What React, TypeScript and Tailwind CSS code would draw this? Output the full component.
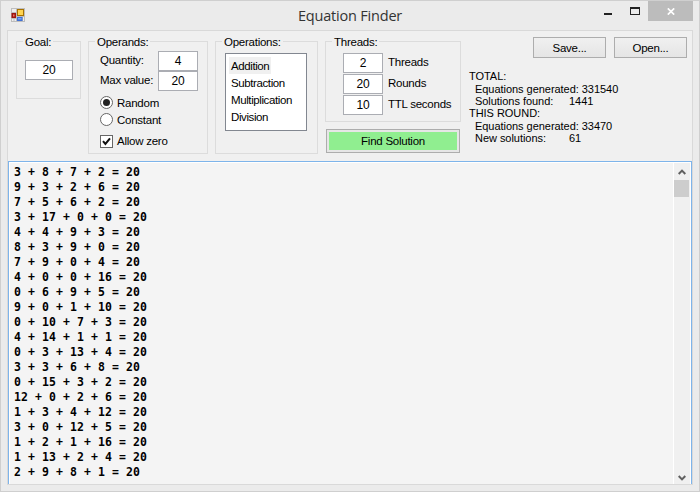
import React from 'react';

const equations = [
  '3 + 8 + 7 + 2 = 20',
  '9 + 3 + 2 + 6 = 20',
  '7 + 5 + 6 + 2 = 20',
  '3 + 17 + 0 + 0 = 20',
  '4 + 4 + 9 + 3 = 20',
  '8 + 3 + 9 + 0 = 20',
  '7 + 9 + 0 + 4 = 20',
  '4 + 0 + 0 + 16 = 20',
  '0 + 6 + 9 + 5 = 20',
  '9 + 0 + 1 + 10 = 20',
  '0 + 10 + 7 + 3 = 20',
  '4 + 14 + 1 + 1 = 20',
  '0 + 3 + 13 + 4 = 20',
  '3 + 3 + 6 + 8 = 20',
  '0 + 15 + 3 + 2 = 20',
  '12 + 0 + 2 + 6 = 20',
  '1 + 3 + 4 + 12 = 20',
  '3 + 0 + 12 + 5 = 20',
  '1 + 2 + 1 + 16 = 20',
  '1 + 13 + 2 + 4 = 20',
  '2 + 9 + 8 + 1 = 20',
];

function Group({ label, className, children }: { label: string; className: string; children: React.ReactNode }) {
  return (
    <section className={`flex flex-col border border-[#dcdcdc] ${className}`}>
      <h2 className="-mt-[8px] ml-[6px] h-[14px] shrink-0 self-start bg-[#f0f0f0] px-[2px] leading-[16px]">{label}</h2>
      {children}
    </section>
  );
}

function Field({ value, className }: { value: string; className: string }) {
  return (
    <div className={`h-5 shrink-0 border border-[#abadb3] bg-white text-center text-[12px] leading-[18px] ${className}`}>
      {value}
    </div>
  );
}

function Chevron({ down = false }: { down?: boolean }) {
  return (
    <svg width="8" height="6" viewBox="0 0 8 6" className={down ? 'rotate-180' : ''}>
      <path d="M.7 5 4 1.6 7.3 5" fill="none" stroke="#606060" strokeWidth="2" />
    </svg>
  );
}

function TitleBar() {
  return (
    <header className="flex h-[29px] items-start">
      <svg width="14" height="14" viewBox="0 0 14 14" className="mt-[7px] ml-[10px]">
        <rect width="14" height="14" fill="#bdbdbd" />
        <path d="M1 1h4v3H1zM1 11h1.5v2H1zM3.5 11h1.5v2H3.5zM12 9h1v4h-1z" fill="#eee" />
        <rect x=".5" y="5" width="4.5" height="5" fill="#9e1610" />
        <rect x="2" y="6.5" width="1.5" height="2" fill="#ef7768" />
        <rect x="6" y="1" width="7" height="7" fill="#a77100" />
        <rect x="7" y="2" width="5" height="5" fill="#ffd451" />
        <rect x="6" y="9" width="5.5" height="4" fill="#3f70d6" />
        <rect x="7" y="10" width="3.5" height="1.5" fill="#79a8f4" />
      </svg>
      <h1 className="mt-[5px] ml-[273px] w-[250px] font-['Open_Sans',sans-serif] text-[14.5px] leading-5 tracking-[-0.2px] text-[#333]">
        Equation Finder
      </h1>
      <div className="ml-[56px] mt-[12px] h-[2px] w-[8px] bg-[#222]" />
      <div className="ml-[18px] mt-[6px] h-[8px] w-[10px] border border-t-2 border-[#222]" />
      <div className="ml-[8px] flex h-5 w-[45px] items-center justify-center bg-[#bcbcbc]">
        <svg width="8" height="7" viewBox="0 0 8 7">
          <path d="m.8.4 6.4 6.2M7.2.4.8 6.6" stroke="#fff" strokeWidth="1.7" />
        </svg>
      </div>
    </header>
  );
}

function Stats() {
  return (
    <div className="mt-[12px] ml-[8px] flex flex-col whitespace-pre text-[11px] leading-3 tracking-[-0.04px]">
      <p className="h-[13px] leading-[13px]">TOTAL:</p>
      <p className="h-3 pl-[6px]">Equations generated: 331540</p>
      <p className="flex h-3 pl-[6px]"><span className="w-[94px]">Solutions found:</span>1441</p>
      <p className="h-[13px]">THIS ROUND:</p>
      <p className="h-3 pl-[6px]">Equations generated: 33470</p>
      <p className="flex h-3 pl-[6px]"><span className="w-[94px]">New solutions:</span>61</p>
    </div>
  );
}

export default function App() {
  return (
    <div className="flex h-[492px] w-[700px] flex-col overflow-hidden border border-[#cfcfcf] bg-[#ebebeb] font-['Liberation_Sans',Arial,sans-serif] text-[11.5px] tracking-[-0.25px] text-black">
      <TitleBar />
      <main className="ml-[6px] flex h-[455px] w-[686px] flex-col border border-[#d9d9d9] bg-[#f0f0f0]">
        <div className="flex h-[130px] shrink-0 items-start">
          <Group label="Goal:" className="mt-[10px] ml-[8px] h-[58px] w-[65px]">
            <Field value="20" className="mt-[12px] ml-[8px] w-12" />
          </Group>
          <Group label="Operands:" className="mt-[10px] ml-[7px] h-[113px] w-[120px]">
            <div className="mt-[3px] flex items-center pl-[11px]">
              <span className="w-[58px]">Quantity:</span>
              <Field value="4" className="w-10" />
            </div>
            <div className="flex items-center pl-[11px]">
              <span className="w-[58px] whitespace-nowrap">Max value:</span>
              <Field value="20" className="w-10" />
            </div>
            <div className="mt-[5px] flex h-[13px] items-center gap-[4px] pl-[11px]">
              <span className="flex size-[13px] items-center justify-center rounded-full border border-[#666] bg-white">
                <span className="size-[7px] rounded-full bg-[#222]" />
              </span>
              <span className="pt-px leading-[15px]">Random</span>
            </div>
            <div className="mt-[4px] flex h-[13px] items-center gap-[4px] pl-[11px]">
              <span className="size-[13px] rounded-full border border-[#666] bg-white" />
              <span className="pt-px leading-[15px]">Constant</span>
            </div>
            <div className="mt-[9px] flex h-[13px] items-center gap-[4px] pl-[11px]">
              <svg width="13" height="13" viewBox="0 0 13 13">
                <rect x=".5" y=".5" width="12" height="12" fill="#fff" stroke="#666" />
                <path d="M3 6.2 5.4 9 10 3.3" fill="none" stroke="#111" strokeWidth="2" />
              </svg>
              <span className="leading-[15px]">Allow zero</span>
            </div>
          </Group>
          <Group label="Operations:" className="mt-[10px] ml-[7px] h-[113px] w-[103px]">
            <ul className="mt-[5px] ml-[9px] h-[78px] w-[82px] border border-[#828790] bg-white pt-[3px] pl-[3px] tracking-[-0.4px]">
              <li className="h-[17px] w-[42px] bg-[#f0f0f0] pl-[2px] leading-[18px]">Addition</li>
              <li className="h-[17px] pl-[2px] leading-[18px]">Subtraction</li>
              <li className="h-[17px] pl-[2px] leading-[18px]">Multiplication</li>
              <li className="h-[17px] pl-[2px] leading-[18px]">Division</li>
            </ul>
          </Group>
          <div className="mt-[10px] ml-[7px] w-[136px]">
            <Group label="Threads:" className="h-[81px]">
              <div className="mt-[5px] flex flex-col gap-px pl-[17px]">
                {[['2', 'Threads'], ['20', 'Rounds'], ['10', 'TTL seconds']].map(([v, t]) => (
                  <div key={t} className="flex items-center gap-[5px]">
                    <Field value={v} className="w-10" />
                    <span>{t}</span>
                  </div>
                ))}
              </div>
            </Group>
            <button className="mt-[7px] ml-px block h-6 w-[134px] border border-[#adadad] bg-[#e6e6e6] p-[2px]">
              <span className="block h-[18px] bg-[#90ee90] leading-[18px]">Find Solution</span>
            </button>
          </div>
          <div className="flex flex-col">
            <div className="mt-[6px] ml-[72px] flex gap-[8px]">
              <button className="h-[21px] w-[73px] border border-[#adadad] bg-linear-to-b from-[#f0f0f0] to-[#e5e5e5] leading-[18px]">Save...</button>
              <button className="h-[21px] w-[73px] border border-[#adadad] bg-linear-to-b from-[#f0f0f0] to-[#e5e5e5] leading-[18px]">Open...</button>
            </div>
            <Stats />
          </div>
        </div>
        <div className="flex h-[323px] w-[684px] border border-b-0 border-[#7eb4ea] bg-white pt-px pr-px pl-px">
          <pre className="w-[663px] bg-[#f4f4f4] pt-[2px] pl-[4px] font-['DejaVu_Sans_Mono',monospace] text-[11.5px] leading-[15px] font-bold tracking-[0.077px]">
            {equations.join('\n')}
          </pre>
          <div className="ml-px flex w-4 flex-col items-center bg-[#f0f0f0]">
            <div className="flex h-[17px] items-center"><Chevron /></div>
            <div className="h-[17px] w-[15px] self-start bg-[#cdcdcd]" />
            <div className="mt-auto flex h-[13px] items-center"><Chevron down /></div>
          </div>
        </div>
      </main>
    </div>
  );
}
